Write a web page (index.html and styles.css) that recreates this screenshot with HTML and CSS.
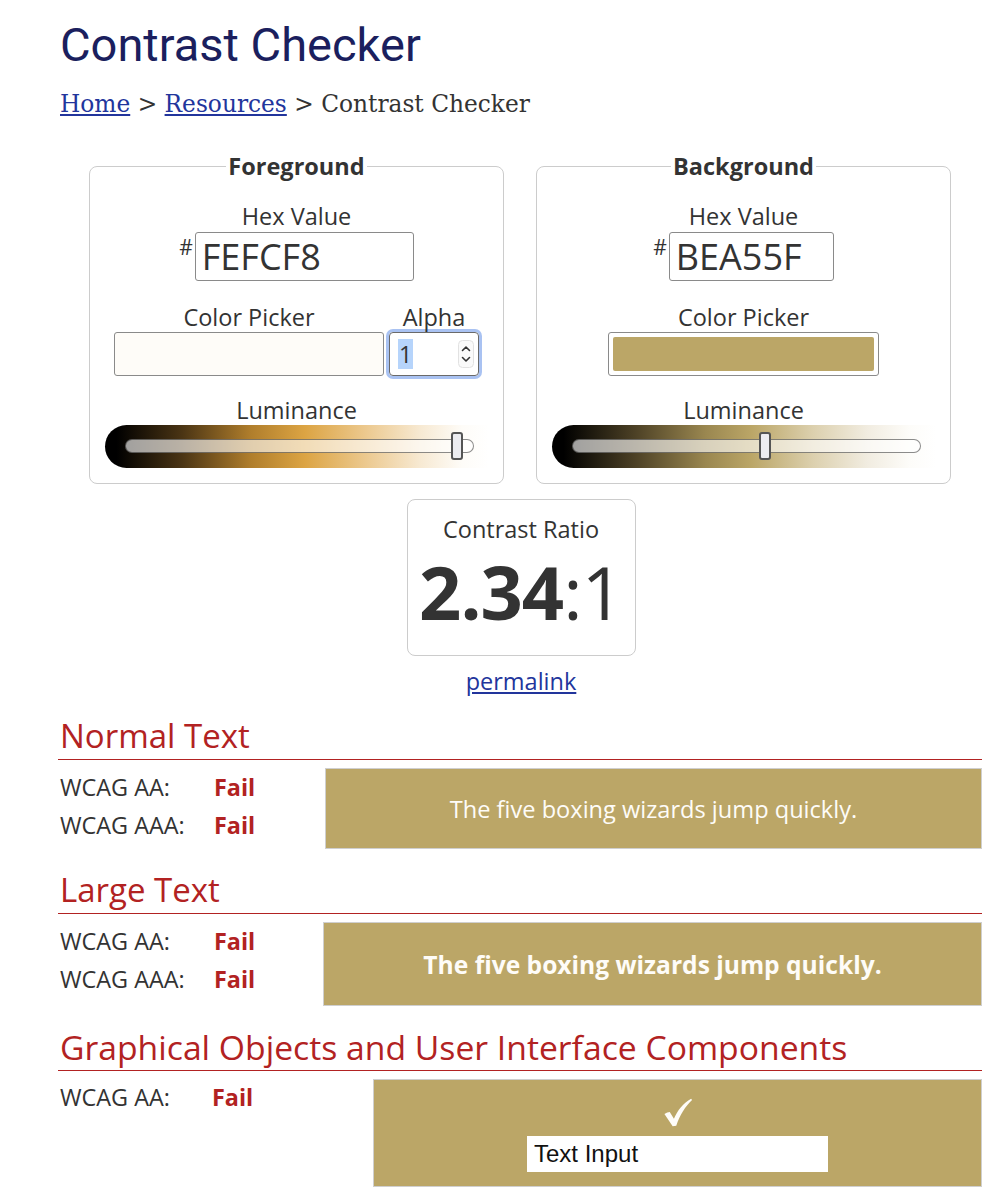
FILE: index.html
```html
<!DOCTYPE html>
<html lang="en">

<head>
  <meta charset="UTF-8">
  <meta name="viewport" content="width=device-width, initial-scale=1.0">
  <title>Contrast Checker</title>
  <link rel="stylesheet" href="styles.css">
</head>

<body>
  <div class="page">
    <h1 class="title">Contrast Checker</h1>
    <nav class="crumbs">
      <a href="#">Home</a> &gt; <a href="#">Resources</a> &gt; Contrast Checker
    </nav>

    <div class="pickers">
      <!-- Foreground -->
      <fieldset class="picker">
        <legend>Foreground</legend>
        <div class="field">
          <label>Hex Value</label>
          <div class="hex-row">
            <span class="hash">#</span>
            <input class="hex hex-fg" type="text" value="FEFCF8">
          </div>
        </div>
        <div class="picker-row">
          <div class="field">
            <label>Color Picker</label>
            <div class="swatch swatch-fg"></div>
          </div>
          <div class="field">
            <label>Alpha</label>
            <div class="alpha">
              <span class="alpha-value">1</span>
              <svg class="spin" width="16" height="28" viewBox="0 0 16 28">
                <rect x="0.5" y="0.5" width="15" height="27" rx="4" fill="#fafafa" stroke="#e2e2e2" />
                <path d="M4.5 10.5 L8 7 L11.5 10.5" fill="none" stroke="#333" stroke-width="1.6" stroke-linecap="round" stroke-linejoin="round" />
                <path d="M4.5 17.5 L8 21 L11.5 17.5" fill="none" stroke="#333" stroke-width="1.6" stroke-linecap="round" stroke-linejoin="round" />
              </svg>
            </div>
          </div>
        </div>
        <div class="field field-lum">
          <label>Luminance</label>
          <div class="lum lum-fg">
            <div class="lum-track">
              <span class="lum-thumb" style="left: 95.5%"></span>
            </div>
          </div>
        </div>
      </fieldset>

      <!-- Background -->
      <fieldset class="picker">
        <legend>Background</legend>
        <div class="field">
          <label>Hex Value</label>
          <div class="hex-row">
            <span class="hash">#</span>
            <input class="hex hex-bg" type="text" value="BEA55F">
          </div>
        </div>
        <div class="picker-row">
          <div class="field">
            <label>Color Picker</label>
            <div class="swatch swatch-bg"><span class="swatch-fill"></span></div>
          </div>
        </div>
        <div class="field field-lum">
          <label>Luminance</label>
          <div class="lum lum-bg">
            <div class="lum-track">
              <span class="lum-thumb" style="left: 55.5%"></span>
            </div>
          </div>
        </div>
      </fieldset>
    </div>

    <div class="ratio">
      <div class="ratio-box">
        <div class="ratio-label">Contrast Ratio</div>
        <div class="ratio-value"><strong>2.34</strong>:1</div>
      </div>
      <a class="permalink" href="#">permalink</a>
    </div>

    <section class="result result-first">
      <h2>Normal Text</h2>
      <div class="result-body">
        <div class="checks">
          <div class="check"><span class="level">WCAG AA:</span><span class="fail">Fail</span></div>
          <div class="check"><span class="level">WCAG AAA:</span><span class="fail">Fail</span></div>
        </div>
        <div class="sample sample-normal">The five boxing wizards jump quickly.</div>
      </div>
    </section>

    <section class="result">
      <h2>Large Text</h2>
      <div class="result-body">
        <div class="checks checks-large">
          <div class="check"><span class="level">WCAG AA:</span><span class="fail">Fail</span></div>
          <div class="check"><span class="level">WCAG AAA:</span><span class="fail">Fail</span></div>
        </div>
        <div class="sample sample-large">The five boxing wizards jump quickly.</div>
      </div>
    </section>

    <section class="result result-last">
      <h2>Graphical Objects and User Interface Components</h2>
      <div class="result-body">
        <div class="checks checks-ui">
          <div class="check"><span class="level level-ui">WCAG AA:</span><span class="fail">Fail</span></div>
        </div>
        <div class="sample sample-ui">
          <svg class="tick" width="30" height="30" viewBox="0 0 30 30" aria-label="check">
            <path d="M1 16.5 C3 15 5 14.3 6.5 14.3 L10.8 21.5 C14.5 12.5 20.5 5.5 28.5 0.8 L29.5 2 C22.5 8.5 17 17.5 13.2 28.5 L9.5 29.2 Z" fill="#fefcf8" />
          </svg>
          <input class="demo-input" type="text" value="Text Input">
        </div>
      </div>
    </section>
  </div>
</body>

</html>
```

FILE: styles.css
```css
* {
  margin: 0;
  padding: 0;
  box-sizing: border-box;
}

body {
  font-family: 'Open Sans', sans-serif;
  color: #333;
  background: #fff;
}

.page {
  width: 922px;
  margin-left: 60px;
  padding-top: 17px;
}

.title {
  font-family: Roboto, sans-serif;
  font-weight: 400;
  font-size: 47px;
  line-height: 56px;
  color: #1b1f5e;
}

.crumbs {
  margin-top: 16px;
  font-family: 'DejaVu Serif', serif;
  font-size: 23.3px;
  line-height: 30px;
  color: #333;
}

.crumbs a {
  color: #22359c;
}

/* Foreground / background pickers */
.pickers {
  display: flex;
  justify-content: center;
  gap: 32px;
  margin-top: 32px;
  margin-left: -2px;
}

.picker {
  width: 415px;
  border: 1px solid #ccc;
  border-radius: 8px;
  padding: 20px 0 15px;
  text-align: center;
}

.picker legend {
  margin: 0 auto;
  padding: 0 2px;
  font-size: 23.5px;
  font-weight: 700;
  line-height: 30px;
  color: #333;
}

.field label {
  display: block;
  font-size: 23.5px;
  line-height: 30px;
  margin-bottom: 1px;
}

.field-lum {
  margin-top: 19px;
}

.field-lum label {
  margin-bottom: 0;
}

.hex-row {
  display: flex;
  justify-content: center;
  align-items: flex-start;
  gap: 2px;
}

.hash {
  font-size: 21px;
  line-height: 20px;
  padding-top: 5px;
}

.hex {
  height: 49px;
  border: 1px solid #8a8a8a;
  border-radius: 3px;
  padding: 0 6px;
  font-family: 'Open Sans', sans-serif;
  font-size: 36px;
  color: #333;
  outline: none;
}

.hex-fg {
  width: 219px;
}

.hex-bg {
  width: 165px;
}

.picker-row {
  display: flex;
  justify-content: center;
  gap: 5px;
  margin-top: 21px;
}

.picker-row .field label {
  margin-bottom: 0;
}

.swatch {
  height: 44px;
  border: 1px solid #8a8a8a;
  border-radius: 3px;
}

.swatch-fg {
  width: 270px;
  background: #fefcf8;
}

.swatch-bg {
  width: 271px;
  padding: 4px;
  background: #fff;
}

.swatch-fill {
  display: block;
  height: 100%;
  background: #bba667;
  border-radius: 2px;
}

.alpha {
  width: 90px;
  height: 44px;
  display: flex;
  align-items: center;
  justify-content: space-between;
  padding: 0 4px 0 8px;
  border: 1px solid #6a6a6a;
  border-radius: 4px;
  box-shadow: 0 0 0 3px #a9c2f2;
}

.alpha-value {
  font-size: 23px;
  line-height: 30px;
  background: #b6d4fb;
  padding: 0 1px;
}

.lum {
  width: 384px;
  height: 43px;
  margin: 0 auto;
  border-radius: 22px 0 0 22px;
  padding: 14px 15px 0 20px;
}

.lum-fg {
  background: linear-gradient(to right, #000 3%, #4a3414 20%, #b07e2c 38%, #dca443 52%, #ecc98f 68%, #f7e9d2 82%, #fefcf8 93%, rgba(255, 255, 255, 0) 100%);
}

.lum-bg {
  background: linear-gradient(to right, #000 3%, #4e4226 22%, #9a8750 40%, #bba667 52%, #dcd0ae 68%, #f1ece0 82%, #fdfcf9 93%, rgba(255, 255, 255, 0) 100%);
}

.lum-track {
  position: relative;
  height: 14px;
  border: 1px solid rgba(0, 0, 0, 0.45);
  border-radius: 7px;
  background: rgba(255, 255, 255, 0.62);
}

.lum-thumb {
  position: absolute;
  top: -8px;
  width: 12px;
  height: 28px;
  margin-left: -6px;
  border: 2px solid #555;
  border-radius: 3px;
  background: #ececf0;
}

/* Contrast ratio */
.ratio {
  display: flex;
  flex-direction: column;
  align-items: center;
  margin-top: 15px;
}

.ratio-box {
  width: 229px;
  height: 157px;
  border: 1px solid #ccc;
  border-radius: 8px;
  text-align: center;
  padding-top: 13px;
}

.ratio-label {
  font-size: 23.5px;
  line-height: 32px;
}

.ratio-value {
  margin-top: 2px;
  font-size: 74px;
  line-height: 90px;
  font-weight: 400;
  letter-spacing: -1px;
}

.ratio-value strong {
  font-weight: 700;
}

.permalink {
  margin-top: 9px;
  font-size: 23.5px;
  line-height: 32px;
  color: #22359c;
}

/* Results */
.result {
  margin-top: 21px;
}

.result-first {
  margin-top: 19px;
}

.result-last {
  margin-top: 21px;
}

.result h2 {
  font-size: 33px;
  font-weight: 400;
  line-height: 40px;
  color: #b22222;
  padding-bottom: 3px;
  border-bottom: 1px solid #b22222;
  margin-left: -2px;
  padding-left: 2px;
}

.result-last h2 {
  font-size: 33.7px;
}

.result-body {
  display: flex;
  margin-top: 8px;
}

.checks {
  width: 265px;
  flex-shrink: 0;
}

.checks-large {
  width: 263px;
}

.checks-ui {
  width: 313px;
  margin-top: -1px;
}

.check {
  display: flex;
  font-size: 23.4px;
  line-height: 38px;
}

.level {
  width: 154px;
}

.level-ui {
  width: 152px;
}

.fail {
  color: #b22222;
  font-weight: 700;
}

.sample {
  flex: 1;
  background: #bba667;
  border: 1px solid #cfcfcf;
  color: #fefcf8;
  display: flex;
  align-items: center;
  justify-content: center;
}

.sample-normal {
  height: 81px;
  font-size: 23.6px;
}

.sample-large {
  height: 84px;
  font-size: 24.6px;
  font-weight: 700;
}

.sample-ui {
  flex-direction: column;
  justify-content: flex-start;
  height: 108px;
  padding: 18px 0 14px;
}

.tick {
  display: block;
}

.demo-input {
  margin-top: 9px;
  width: 301px;
  height: 37px;
  border: none;
  padding: 0 7px;
  font-family: 'Liberation Sans', sans-serif;
  font-size: 24px;
  color: #111;
  background: #fff;
  outline: none;
}
```
